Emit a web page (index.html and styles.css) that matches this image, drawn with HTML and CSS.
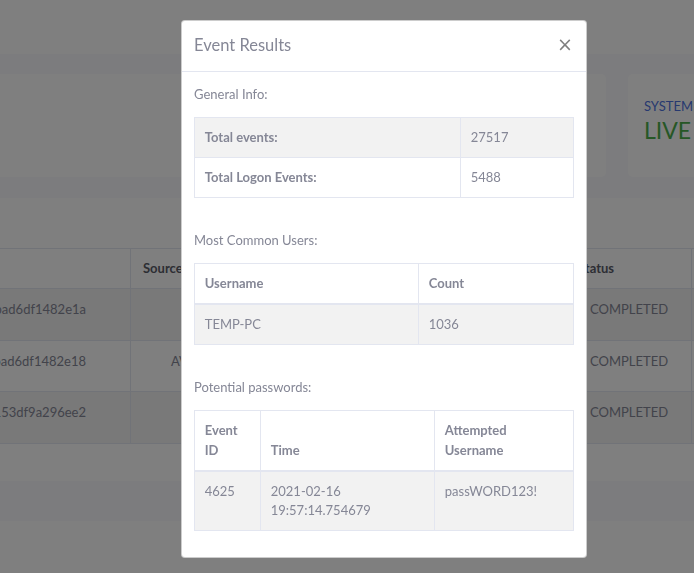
FILE: index.html
```html
<!DOCTYPE html>
<html lang="en">

<head>
    <meta charset="UTF-8">
    <meta name="viewport" content="width=device-width, initial-scale=1.0">
    <title>Event Results</title>
    <link rel="stylesheet" href="styles.css">
</head>

<body>
    <div class="page">
        <div class="topbar"></div>

        <div class="cards">
            <div class="card card-wide"></div>
            <div class="card card-status">
                <div class="card-label">System</div>
                <div class="card-value">LIVE</div>
            </div>
        </div>

        <div class="card table-card">
            <table class="jobs">
                <thead>
                    <tr>
                        <th class="col-id"></th>
                        <th class="col-source">Source</th>
                        <th class="col-mid"></th>
                        <th class="col-status">Status</th>
                        <th></th>
                    </tr>
                </thead>
                <tbody>
                    <tr class="odd">
                        <td class="col-id">602bad6df1482e1a</td>
                        <td></td>
                        <td></td>
                        <td class="col-status"><span class="done">COMPLETED</span></td>
                        <td></td>
                    </tr>
                    <tr>
                        <td class="col-id">602bad6df1482e18</td>
                        <td><span class="source">AV</span></td>
                        <td></td>
                        <td class="col-status"><span class="done">COMPLETED</span></td>
                        <td></td>
                    </tr>
                    <tr class="odd">
                        <td class="col-id">602b153df9a296ee2</td>
                        <td></td>
                        <td></td>
                        <td class="col-status"><span class="done">COMPLETED</span></td>
                        <td></td>
                    </tr>
                </tbody>
            </table>
        </div>

        <div class="footer">
            <span>Copyright &copy; Your Website 2021</span>
        </div>
    </div>

    <div class="backdrop"></div>

    <div class="modal">
        <div class="modal-header">
            <h5 class="modal-title">Event Results</h5>
            <button class="close">&times;</button>
        </div>
        <div class="modal-body">
            <p>General Info:</p>
            <table class="results striped">
                <tbody>
                    <tr>
                        <th class="w-label">Total events:</th>
                        <td>27517</td>
                    </tr>
                    <tr>
                        <th>Total Logon Events:</th>
                        <td>5488</td>
                    </tr>
                </tbody>
            </table>
            <br>
            <p>Most Common Users:</p>
            <table class="results striped">
                <thead>
                    <tr>
                        <th class="w-user">Username</th>
                        <th>Count</th>
                    </tr>
                </thead>
                <tbody>
                    <tr>
                        <td>TEMP-PC</td>
                        <td>1036</td>
                    </tr>
                </tbody>
            </table>
            <br>
            <p>Potential passwords:</p>
            <table class="results striped">
                <thead>
                    <tr>
                        <th class="w-id">Event ID</th>
                        <th class="w-time">Time</th>
                        <th>Attempted Username</th>
                    </tr>
                </thead>
                <tbody>
                    <tr>
                        <td>4625</td>
                        <td>2021-02-16 19:57:14.754679</td>
                        <td>passWORD123!</td>
                    </tr>
                </tbody>
            </table>
        </div>
    </div>
</body>

</html>
```

FILE: styles.css
```css
html,
body {
    margin: 0;
    height: 100%;
    overflow: hidden;
}

body {
    font-family: 'Lato', 'Noto Sans', sans-serif;
    font-size: 13px;
    line-height: 1.5;
    color: #858796;
    background-color: #f8f9fc;
}

.page {
    width: 900px;
    margin-left: -100px;
}

.topbar {
    height: 54px;
    background-color: #fff;
}

.cards {
    display: flex;
    gap: 22px;
    margin-top: 20px;
    padding-left: 80px;
}

.card {
    flex-shrink: 0;
    background-color: #fff;
    border-radius: 5px;
}

.card-wide {
    width: 626px;
    height: 103px;
}

.card-status {
    width: 200px;
    height: 103px;
    padding: 23px 16px 0;
    box-sizing: border-box;
}

.card-label {
    color: #4e73df;
    font-size: 13px;
    text-transform: uppercase;
    line-height: 18px;
}

.card-value {
    color: #4cae4c;
    font-size: 23px;
    line-height: 30px;
}

.table-card {
    margin-top: 21px;
    padding: 50px 0 37px;
    border-radius: 0;
}

.jobs {
    width: 100%;
    border-collapse: collapse;
    table-layout: fixed;
    color: #858796;
}

.jobs th,
.jobs td {
    box-sizing: border-box;
    border: 1px solid #e3e6f0;
    padding: 0 12px;
    text-align: left;
    vertical-align: top;
    white-space: nowrap;
    overflow: hidden;
}

.jobs th {
    height: 40px;
    vertical-align: middle;
    color: #5a5c69;
    font-weight: 700;
}

.jobs td {
    height: 51.5px;
    padding-top: 11px;
}

.jobs .odd td {
    background-color: #f2f2f2;
}

.jobs .col-id {
    width: 230px;
    text-align: right;
    padding-right: 44px;
}

.jobs .col-source {
    width: 160px;
}

.jobs .col-mid {
    width: 275px;
}

.jobs .col-status {
    width: 126px;
}

.jobs .done {
    padding-left: 12px;
}

.jobs .source {
    padding-left: 28px;
}

.footer {
    margin-top: 40px;
    height: 60px;
    background-color: #fff;
    font-size: 11px;
    padding: 22px 0 0 460px;
    box-sizing: border-box;
}

.backdrop {
    position: fixed;
    inset: 0;
    background-color: rgba(0, 0, 0, 0.5);
}

.modal {
    position: absolute;
    left: 181px;
    top: 20px;
    width: 406px;
    box-sizing: border-box;
    background-color: #fff;
    border: 1px solid rgba(0, 0, 0, 0.2);
    border-radius: 4px;
}

.modal-header {
    display: flex;
    align-items: center;
    justify-content: space-between;
    padding: 12px 13px 13px 12px;
    border-bottom: 1px solid #e3e6f0;
}

.modal-title {
    margin: 0;
    font-size: 16.5px;
    font-weight: 400;
    line-height: 1.5;
    color: #858796;
}

.close {
    border: none;
    background: none;
    padding: 0;
    margin: 0 0 2px;
    font-family: 'DejaVu Sans', sans-serif;
    font-size: 19px;
    font-weight: 400;
    line-height: 1;
    color: #000;
    opacity: 0.5;
    cursor: pointer;
}

.modal-body {
    padding: 13px 12px 13px;
}

.modal-body p {
    margin: 0 0 13px;
}

.results {
    width: 100%;
    border-collapse: collapse;
    table-layout: fixed;
    margin-bottom: 13px;
    color: #858796;
}

.results th,
.results td {
    box-sizing: border-box;
    border: 1px solid #e3e6f0;
    padding: 9.75px;
    text-align: left;
    vertical-align: top;
}

.results thead th {
    vertical-align: bottom;
    border-bottom-width: 2px;
}

.results.striped tbody tr:nth-of-type(odd) {
    background-color: rgba(0, 0, 0, 0.05);
}

.results .w-label {
    width: 266px;
}

.results .w-user {
    width: 224px;
}

.results .w-id {
    width: 66px;
}

.results .w-time {
    width: 174px;
}
```
